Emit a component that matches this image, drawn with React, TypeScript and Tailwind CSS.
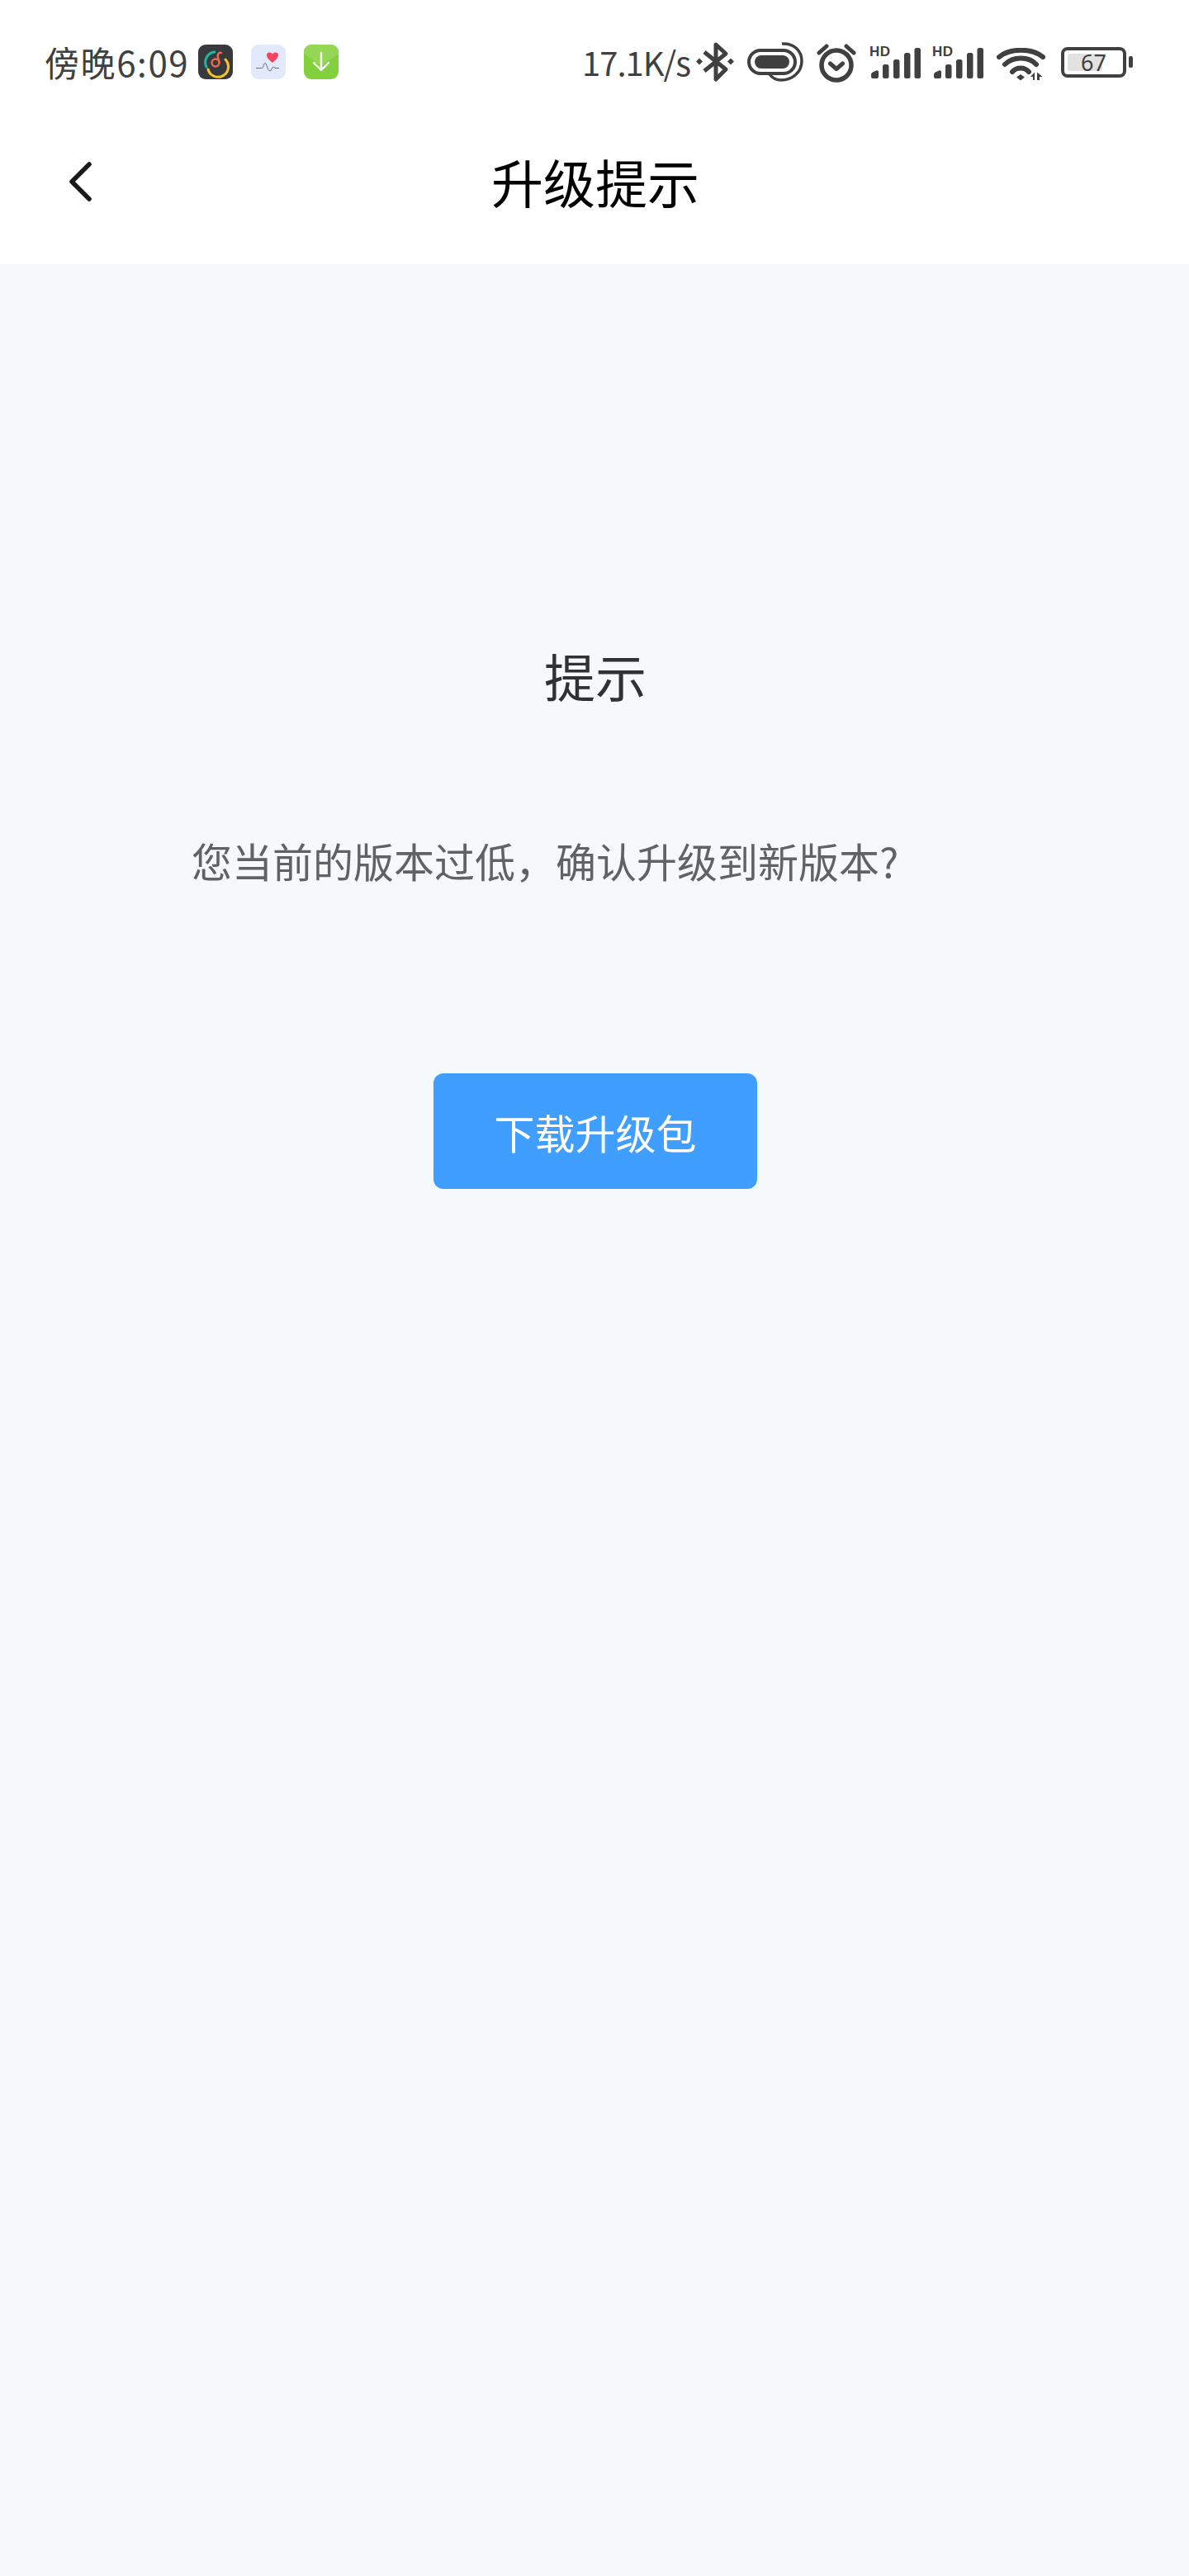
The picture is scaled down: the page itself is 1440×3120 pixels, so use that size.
const FONT = "font-['Noto_Sans_CJK_SC','Noto_Sans',sans-serif]";

function NetEase() {
  return (
    <svg width="42" height="42" viewBox="0 0 42 42" className="shrink-0">
      <rect width="42" height="42" rx="9" fill="#38393d" />
      <path d="M10 27 A12.500 12.500 0 0 1 20 9" fill="none" stroke="#1fb5a0" strokeWidth="3" strokeLinecap="round" />
      <path d="M33 18 A12.500 12.500 0 1 1 12 30" fill="none" stroke="#f5c42c" strokeWidth="3" strokeLinecap="round" />
      <circle cx="21" cy="22" r="4.500" fill="none" stroke="#ee6a4c" strokeWidth="2.400" />
      <path d="M25.500 22 C25.500 17 22 15 24.500 11 C25.500 9.500 27 9.500 28 10" fill="none" stroke="#ee6a4c" strokeWidth="2.400" strokeLinecap="round" />
    </svg>
  );
}

function Heart() {
  return (
    <svg width="42" height="42" viewBox="0 0 42 42" className="shrink-0">
      <rect width="42" height="42" rx="9" fill="#e1e9fb" />
      <path d="M26 22 C20 17 19 15 19 12.500 C19 9.500 23 8 26 11.500 C29 8 33 9.500 33 12.500 C33 15 32 17 26 22 Z" fill="#f6465f" />
      <path d="M6 28.500 H13 C15 28.500 15.500 22.500 17 22.500 C19 22.500 20 32 23 32 C25 32 25 27 27 27 C28 27 28.500 29 30 28.500 H34" fill="none" stroke="#5a6170" strokeWidth="0.9" />
    </svg>
  );
}

function Down() {
  return (
    <svg width="42" height="42" viewBox="0 0 42 42" className="shrink-0">
      <rect width="42" height="42" rx="9" fill="#82d13c" />
      <path d="M0 9 A9 9 0 0 1 9 0 H33 A9 9 0 0 1 42 9 V11 L21 26 L0 11 Z" fill="#93d755" />
      <path d="M21 10 V31 M12 22 L21 31 L30 22" fill="none" stroke="#fff" strokeWidth="2.400" strokeLinecap="round" strokeLinejoin="round" />
    </svg>
  );
}

function Bluetooth() {
  return (
    <svg width="46" height="50" viewBox="0 0 46 50" className="shrink-0">
      <path d="M10 13 L36 34 L24 46 V4 L36 15 L10 36" fill="none" stroke="#404040" strokeWidth="5" strokeLinejoin="round" />
      <path d="M0 24.500 L4 20.500 L8 24.500 L4 28.500 Z M38 24.500 L42 20.500 L46 24.500 L42 28.500 Z" fill="#404040" />
    </svg>
  );
}

function Link() {
  return (
    <svg width="68" height="50" viewBox="0 0 68 50" className="shrink-0">
      <rect x="2" y="11" width="56" height="28" rx="14" fill="none" stroke="#404040" strokeWidth="4" />
      <rect x="9" y="17" width="42" height="16" rx="8" fill="#404040" />
      <path d="M42 3 C56 2 66 11 66 24 C66 38 54 47 41 47 C35 47 30 44 27 40" fill="none" stroke="#404040" strokeWidth="3.500" />
    </svg>
  );
}

function Alarm() {
  return (
    <svg width="50" height="50" viewBox="0 0 50 50" className="shrink-0 mt-[2px]">
      <circle cx="25" cy="28" r="18" fill="none" stroke="#404040" strokeWidth="5.500" />
      <path d="M17.500 26 L25 32.500 L32.500 26" fill="none" stroke="#404040" strokeWidth="5" strokeLinecap="round" strokeLinejoin="round" />
      <path d="M4 13 L13 5 M37 5 L46 13" fill="none" stroke="#404040" strokeWidth="5" strokeLinecap="round" />
    </svg>
  );
}

function Signal() {
  return (
    <div className="relative w-[64px] h-[38px] shrink-0 mt-[2px]">
      <svg width="64" height="38" viewBox="0 0 64 38" className="absolute left-0 top-0">
        <path d="M3 35.500 V33 Q3 31.500 5 30.500 L9 28.500 Q12 27.500 12 30 V36 Q12 38 10 38 H5 Q3 38 3 35.500 Z" fill="#404040" />
        <rect x="17" y="21" width="7.500" height="17" rx="2.500" fill="#404040" />
        <rect x="30" y="15" width="7.500" height="23" rx="2.500" fill="#404040" />
        <rect x="43" y="7" width="7.500" height="31" rx="2.500" fill="#404040" />
        <rect x="55.500" y="1" width="7.500" height="37" rx="2.500" fill="#404040" />
      </svg>
      <span className="absolute left-[1px] top-[-4px] text-[17px] leading-[20px] font-bold text-[#404040] tracking-[0.5px] font-['Liberation_Sans',sans-serif]">HD</span>
    </div>
  );
}

function Wifi() {
  return (
    <svg width="60" height="40" viewBox="0 0 60 40" className="shrink-0 mt-[5px]">
      <path d="M3 11 C16 0 43 0 56 11" fill="none" stroke="#404040" strokeWidth="6" strokeLinecap="round" />
      <path d="M10 20 C20 10 39 10 48 20" fill="none" stroke="#404040" strokeWidth="6" strokeLinecap="round" />
      <path d="M19 29 C24 23 34 23 39 29" fill="none" stroke="#404040" strokeWidth="6" strokeLinecap="round" />
      <path d="M24 35.500 L29 32 L34 35.500 L29 39.500 Z" fill="#404040" />
      <path d="M41 35 L46 29.500 V39 H44 V35 Z M49 29.500 L55.500 35 H52 V39 H49 Z" fill="#404040" />
    </svg>
  );
}

function Battery() {
  return (
    <div className="flex items-center shrink-0">
      <div className="relative w-[79px] h-[37px] rounded-[8px] border-[4px] border-[#404040]">
        <div className="absolute left-[4px] top-[4px] bottom-[4px] w-[42px] rounded-[3px] bg-[#e2e2e2]" />
        <span className="absolute inset-0 flex items-center justify-center text-[27px] leading-none text-[#404040] font-['Noto_Sans',sans-serif]">67</span>
      </div>
      <div className="ml-[3px] w-[5px] h-[14px] rounded-[2px] bg-[#404040]" />
    </div>
  );
}

export default function App() {
  return (
    <div className={`w-[1440px] h-[3120px] flex flex-col bg-[#f6f9fc] ${FONT}`}>
      <header className="bg-white h-[320px] shrink-0 flex flex-col">
        <div className="h-[150px] flex items-center pl-[54px] pr-[68px]">
          <span className="text-[42px] leading-none text-[#404040] w-[177px] whitespace-nowrap tracking-[1.6px]">傍晚6:09</span>
          <div className="ml-[9px] flex gap-[22px]">
            <NetEase />
            <Heart />
            <Down />
          </div>
          <div className="ml-auto flex items-center">
            <span className="text-[40px] leading-none text-[#404040] whitespace-nowrap tracking-[-1px]">17.1K/s</span>
            <div className="ml-[7px] flex items-center">
              <Bluetooth />
              <div className="ml-[16px] flex"><Link /></div>
              <div className="ml-[15px] flex"><Alarm /></div>
              <div className="ml-[14px] flex"><Signal /></div>
              <div className="ml-[12px] flex"><Signal /></div>
              <div className="ml-[15px] flex"><Wifi /></div>
              <div className="ml-[18px] flex"><Battery /></div>
            </div>
          </div>
        </div>
        <div className="relative flex-1 flex items-center justify-center pb-[34px] pl-[2px]">
          <svg width="32" height="50" viewBox="0 0 32 50" className="absolute left-[80px] top-[45px]">
            <path d="M28 4 L7 25 L28 46" fill="none" stroke="#1a1a1a" strokeWidth="5.500" strokeLinecap="round" strokeLinejoin="round" />
          </svg>
          <h1 className="text-[63px] leading-none font-normal text-black">升级提示</h1>
        </div>
      </header>
      <main className="flex-1 flex flex-col items-center">
        <h2 className="mt-[462px] ml-[2px] text-[62px] leading-[72px] font-normal text-[#303133]">提示</h2>
        <p className="mt-[158px] w-full pl-[232px] text-[49px] leading-[60px] text-[#606266] whitespace-nowrap">您当前的版本过低，确认升级到新版本?</p>
        <button className="mt-[228px] ml-[2px] w-[392px] h-[140px] rounded-[12px] bg-[#409eff] text-white text-[49px] leading-none">下载升级包</button>
      </main>
    </div>
  );
}
